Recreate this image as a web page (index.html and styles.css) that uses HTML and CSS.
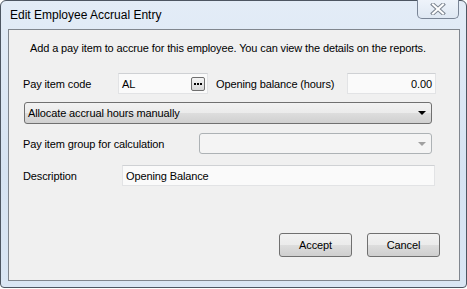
FILE: index.html
```html
<!DOCTYPE html>
<html lang="en">
  <head>
    <meta charset="UTF-8" />
    <title>Edit Employee Accrual Entry</title>
    <link rel="stylesheet" href="styles.css">
  </head>
  <body>
    <div class="window">
      <div class="titlebar">
        <span class="title">Edit Employee Accrual Entry</span>
        <button class="close" type="button">
          <svg width="16" height="12" viewBox="0 0 16 12">
            <path d="M3 1.5 L13 10.5 M13 1.5 L3 10.5" stroke="#7d8591" stroke-width="4" stroke-linecap="square" fill="none" />
            <path d="M3 1.5 L13 10.5 M13 1.5 L3 10.5" stroke="#ffffff" stroke-width="2" stroke-linecap="square" fill="none" />
          </svg>
        </button>
      </div>

      <div class="client">
        <p class="intro">Add a pay item to accrue for this employee. You can view the details on the reports.</p>

        <div class="form">
          <div class="row">
            <label class="label code-label">Pay item code</label>
            <div class="field code-field">
              <span>AL</span>
              <button class="browse" type="button"><i></i><i></i><i></i></button>
            </div>
            <label class="label balance-label">Opening balance (hours)</label>
            <div class="field balance-field">0.00</div>
          </div>

          <div class="combo method-combo">
            <span>Allocate accrual hours manually</span>
            <span class="arrow"></span>
          </div>

          <div class="row group-row">
            <label class="label group-label">Pay item group for calculation</label>
            <div class="combo disabled group-combo">
              <span></span>
              <span class="arrow"></span>
            </div>
          </div>

          <div class="row desc-row">
            <label class="label desc-label">Description</label>
            <div class="field desc-field">Opening Balance</div>
          </div>
        </div>

        <div class="actions">
          <button class="btn" type="button">Accept</button>
          <button class="btn" type="button">Cancel</button>
        </div>
      </div>
    </div>
  </body>
</html>
```

FILE: styles.css
```css
body {
  margin: 0;
  background-color: #ffffff;
  font-family: "Liberation Sans", Arial, sans-serif;
  font-size: 11px;
  letter-spacing: -0.12px;
  color: #000;
}

.window {
  width: 467px;
  height: 288px;
  box-sizing: border-box;
  border: 1px solid #4d5662;
  border-radius: 6px 6px 4px 4px;
  background: linear-gradient(to bottom, #e3ecf7, #d6e3f2 60%, #dae6f4);
  display: flex;
  flex-direction: column;
}

.titlebar {
  height: 28px;
  display: flex;
  justify-content: space-between;
  align-items: flex-start;
}

.title {
  padding: 7px 0 0 9px;
  font-size: 12px;
  line-height: 15px;
  letter-spacing: 0;
  color: #000;
}

.close {
  width: 42px;
  height: 19px;
  margin: -1px 7px 0 0;
  padding: 0;
  border: 1px solid #7a8596;
  border-top: none;
  border-radius: 0 0 5px 5px;
  background: linear-gradient(to bottom, #eef3fa, #dfe8f3);
  display: flex;
  align-items: center;
  justify-content: center;
}

.client {
  height: 252px;
  box-sizing: border-box;
  margin: 0 6px 0 7px;
  border: 1px solid #80868e;
  background-color: #f0f0f0;
  display: flex;
  flex-direction: column;
}

.intro {
  margin: 11px 0 0 21px;
  line-height: 14px;
}

.form {
  margin: 18px 0 0 14px;
  display: flex;
  flex-direction: column;
}

.row {
  display: flex;
  align-items: center;
}

.label {
  flex-shrink: 0;
}

.code-label {
  width: 95px;
}

.balance-label {
  width: 131px;
  margin-left: 8px;
}

.group-label {
  width: 176px;
}

.desc-label {
  width: 99px;
}

.field {
  height: 21px;
  box-sizing: border-box;
  border: 1px solid #e2e3e5;
  border-top-color: #cfd1d4;
  background-color: #fafafa;
  display: flex;
  align-items: center;
  padding: 0 3px;
}

.code-field {
  width: 90px;
  justify-content: space-between;
  padding-right: 2px;
}

.browse {
  width: 14px;
  height: 14px;
  padding: 0;
  border: 1px solid #6f6f6f;
  border-radius: 2px;
  background: linear-gradient(to bottom, #f4f4f4, #d8d8d8);
  display: flex;
  align-items: center;
  justify-content: center;
  gap: 1px;
}

.browse i {
  width: 2px;
  height: 2px;
  background-color: #000;
}

.balance-field {
  width: 89px;
  justify-content: flex-end;
}

.combo {
  height: 22px;
  box-sizing: border-box;
  border: 1px solid #707070;
  border-radius: 3px;
  background: linear-gradient(to bottom, #f2f2f2, #ebebeb 50%, #dddddd 51%, #d0d0d0);
  display: flex;
  align-items: center;
  justify-content: space-between;
  padding: 0 5px 0 3px;
}

.arrow {
  width: 0;
  height: 0;
  border-left: 4px solid transparent;
  border-right: 4px solid transparent;
  border-top: 4px solid #000;
}

.method-combo {
  width: 408px;
  margin: 8px 0 0 1px;
}

.group-row {
  margin-top: 9px;
}

.group-combo {
  width: 233px;
  height: 21px;
}

.combo.disabled {
  border-color: #adb2b5;
  background: #f4f4f4;
}

.combo.disabled .arrow {
  border-top-color: #a0a0a0;
}

.desc-row {
  margin-top: 11px;
}

.desc-field {
  width: 313px;
}

.actions {
  margin: 47px 19px 0 0;
  display: flex;
  justify-content: flex-end;
  gap: 15px;
}

.btn {
  width: 73px;
  height: 24px;
  padding: 0;
  border: 1px solid #707070;
  border-radius: 3px;
  background: linear-gradient(to bottom, #f2f2f2, #ebebeb 50%, #dddddd 51%, #cfcfcf);
  font-family: "Liberation Sans", Arial, sans-serif;
  font-size: 11px;
  letter-spacing: -0.12px;
  color: #000;
}
```
